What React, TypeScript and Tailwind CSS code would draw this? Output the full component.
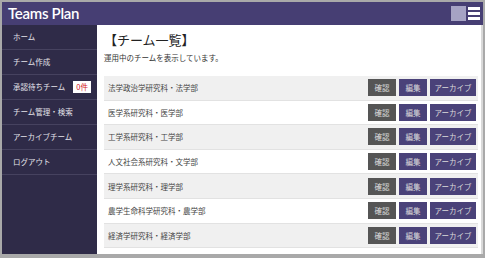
import React from 'react';

const NAV = ['ホーム', 'チーム作成', '承認待ちチーム', 'チーム管理・検索', 'アーカイブチーム', 'ログアウト'];

const TEAMS = [
  '法学政治学研究科・法学部',
  '医学系研究科・医学部',
  '工学系研究科・工学部',
  '人文社会系研究科・文学部',
  '理学系研究科・理学部',
  '農学生命科学研究科・農学部',
  '経済学研究科・経済学部',
];

const jp = { fontFamily: '"Noto Sans CJK JP", "Noto Sans", sans-serif' };

const App = () => {
  return (
    <div className="w-[485px] h-[258px] bg-[#a9a9a9] pt-[2px] pl-[2px] pr-[2px] pb-[4px] overflow-hidden" style={jp}>
      <div className="flex flex-col h-full bg-white">
        {/* Header */}
        <header className="h-[23px] bg-[#463e73] flex items-center justify-between pl-[6px] pr-[3px] shrink-0">
          <span className="text-white text-[15px] font-semibold tracking-[-0.3px] leading-none" style={{ fontFamily: 'Lato, "Open Sans", sans-serif' }}>
            Teams Plan
          </span>
          <div className="flex items-center gap-[2px]">
            <div className="w-[15px] h-[15px] bg-[#a6a3c4]" />
            <div className="flex flex-col gap-[2px] w-[12px]">
              <div className="h-[3px] bg-white" />
              <div className="h-[3px] bg-white" />
              <div className="h-[3px] bg-white" />
            </div>
          </div>
        </header>

        <div className="flex flex-1 min-h-0">
          {/* Sidebar */}
          <nav className="w-[95px] bg-[#2f2b48] shrink-0 flex flex-col">
            {NAV.map((n) => (
              <div key={n} className="h-[25px] border-b border-[#46425f] flex items-center pl-[11px] text-[7.5px] text-[#e4e3ea]">
                <span>{n}</span>
                {n === '承認待ちチーム' && (
                  <span className="ml-[8px] bg-white text-[#d4141a] text-[7.5px] px-[3px] h-[12px] flex items-center">0件</span>
                )}
              </div>
            ))}
          </nav>

          {/* Main */}
          <main className="flex-1 border-r-[2px] border-[#d9d9d9] pl-[7px] pr-[3px] pt-[6px]">
            <h1 className="text-[13px] text-[#222] leading-[18px]">【チーム一覧】</h1>
            <p className="text-[7.5px] text-[#333] mt-[4px] leading-[10px]">運用中のチームを表示しています。</p>
            <div className="mt-[13px]">
              {TEAMS.map((t, i) => (
                <div
                  key={t}
                  className={`h-[24.6px] border-b border-[#e2e2e2] flex items-center justify-between pl-[4px] pr-[2px] ${i % 2 === 0 ? 'bg-[#f0f0f0]' : 'bg-white'}`}
                >
                  <span className="text-[7.5px] text-[#444]">{t}</span>
                  <div className="flex gap-[3px] text-[7.5px] text-[#dcdcdc]">
                    <span className="w-[28px] h-[17px] bg-[#555555] flex items-center justify-center">確認</span>
                    <span className="w-[28px] h-[17px] bg-[#4a4279] flex items-center justify-center">編集</span>
                    <span className="w-[46px] h-[17px] bg-[#4a4279] flex items-center justify-center">アーカイブ</span>
                  </div>
                </div>
              ))}
            </div>
          </main>
        </div>
      </div>
    </div>
  );
};

export default App;
